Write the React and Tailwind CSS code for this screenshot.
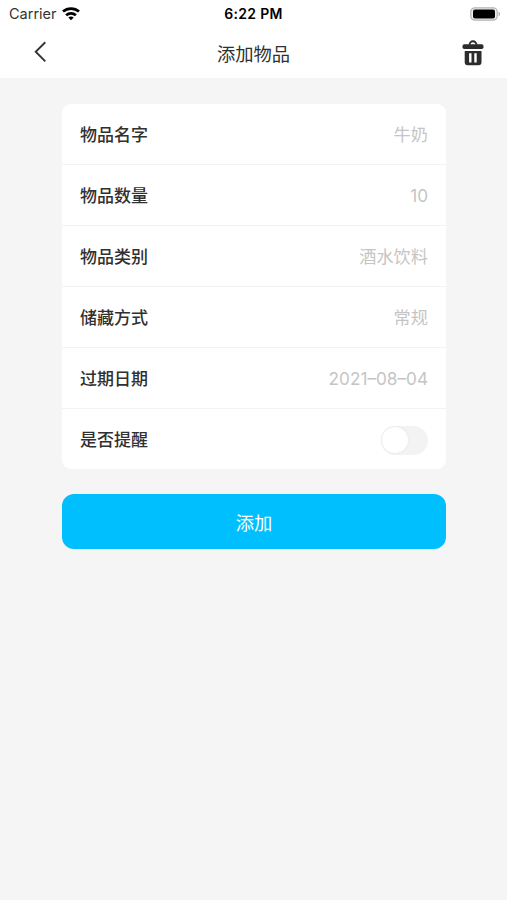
import React, { useState } from 'react';

const INITIAL_ITEM = [
  { key: 'name', label: '物品名字', value: '牛奶' },
  { key: 'count', label: '物品数量', value: '10' },
  { key: 'category', label: '物品类别', value: '酒水饮料' },
  { key: 'storage', label: '储藏方式', value: '常规' },
  { key: 'expires', label: '过期日期', value: '2021–08–04' },
];

function WifiIcon() {
  return (
    <svg width="18" height="14" viewBox="0 0 18 14" fill="none" stroke="#000" strokeWidth="2.7">
      <path d="M1 4.6C5.4.5 12.6.5 17 4.6" />
      <path d="M4.1 8.3c2.8-2.6 7-2.6 9.8 0" />
      <path d="M9 13.3 6.3 10.6c1.5-1.4 3.9-1.4 5.4 0Z" fill="#000" stroke="none" />
    </svg>
  );
}

function BatteryIcon() {
  return (
    <svg width="31" height="14" viewBox="0 0 31 14">
      <rect x="0.8" y="0.8" width="26.4" height="12.4" rx="4" fill="#f0f0f0" stroke="#b4b4b4" strokeWidth="1.2" />
      <rect x="3" y="2.6" width="22" height="8.8" rx="2" fill="#000" />
      <path d="M28.6 4.8c1.9.8 1.9 3.6 0 4.4Z" fill="#a6a6a6" />
    </svg>
  );
}

function TrashIcon() {
  return (
    <svg width="22" height="26" viewBox="0 0 22 26">
      <path d="M7.5 4.8a3.5 3.5 0 0 1 7 0" fill="none" stroke="#2c2c2c" strokeWidth="1.9" />
      <rect x="0.5" y="4.2" width="21" height="4.9" rx="1.8" fill="#2c2c2c" />
      <path
        fillRule="evenodd"
        fill="#2c2c2c"
        d="M2.7 10.9h16.8v11.3a3 3 0 0 1-3 3H5.7a3 3 0 0 1-3-3ZM7.1 13.2v9.2h2.4v-9.2ZM12.3 13.2v9.2h2.4v-9.2Z"
      />
    </svg>
  );
}

export default function AddItemPage() {
  const [remind, setRemind] = useState(false);

  return (
    <main className="min-h-screen bg-[#f5f5f5] text-[#303030] font-['Inter','Noto_Sans_CJK_SC',sans-serif]">
      <header className="h-[78px] bg-white">
        <div className="grid grid-cols-3 items-center h-[27px] pl-[6px] pr-[6px]">
          <div className="flex items-center gap-[5px] pl-[3px]">
            <span className="pt-px text-[14.5px] leading-none text-[#333]">Carrier</span>
            <WifiIcon />
          </div>
          <span className="text-center text-[14px] leading-none font-semibold tracking-[0.3px] text-black">6:22 PM</span>
          <div className="flex justify-end">
            <BatteryIcon />
          </div>
        </div>

        <div className="grid grid-cols-[1fr_auto_1fr] items-center h-[51px] pl-[23px] pr-[23px]">
          <button type="button" aria-label="返回" className="justify-self-start pl-[11px] pb-[2px]">
            <svg width="13" height="22" viewBox="0 0 13 22" fill="none" stroke="#333" strokeWidth="1.9">
              <path d="M11.3 1.2 1.7 10.7l9.6 9.6" />
            </svg>
          </button>
          <h1 className="pt-[3px] text-center text-[18.3px] leading-none whitespace-nowrap">添加物品</h1>
          <button type="button" aria-label="删除" className="justify-self-end">
            <TrashIcon />
          </button>
        </div>
      </header>

      <div className="pl-[62px] pr-[61px] pt-[26px]">
        <section className="h-[365px] rounded-[9px] bg-white">
          {INITIAL_ITEM.map(field => (
            <div
              key={field.key}
              className="flex items-center justify-between h-[61px] pl-[18px] pr-[18px] border-b border-[#f3f3f3]"
            >
              <span className="pt-[3px] text-[17px] leading-none font-medium">{field.label}</span>
              <span className="pt-[2px] text-[17.2px] leading-none text-[#c5c5c5]">{field.value}</span>
            </div>
          ))}

          <div className="flex items-center justify-between h-[60px] px-[18px]">
            <span className="pt-[3px] text-[17px] leading-none font-medium">是否提醒</span>
            <button
              type="button"
              role="switch"
              aria-checked={remind}
              aria-label="是否提醒"
              onClick={() => setRemind(!remind)}
              className={`mt-[2px] flex items-center w-[47px] h-[29px] p-px rounded-full ${remind ? 'justify-end bg-[#00bfff]' : 'justify-start bg-[#f3f3f3]'}`}
            >
              <span className="size-[26px] rounded-full bg-white shadow-[0_0_1px_1px_#ececec]" />
            </button>
          </div>
        </section>

        <button
          type="button"
          className="mt-[25px] w-full h-[55px] rounded-[12px] bg-[#00bfff] pt-[3px] text-[18.3px] leading-none text-white"
        >
          添加
        </button>
      </div>
    </main>
  );
}
